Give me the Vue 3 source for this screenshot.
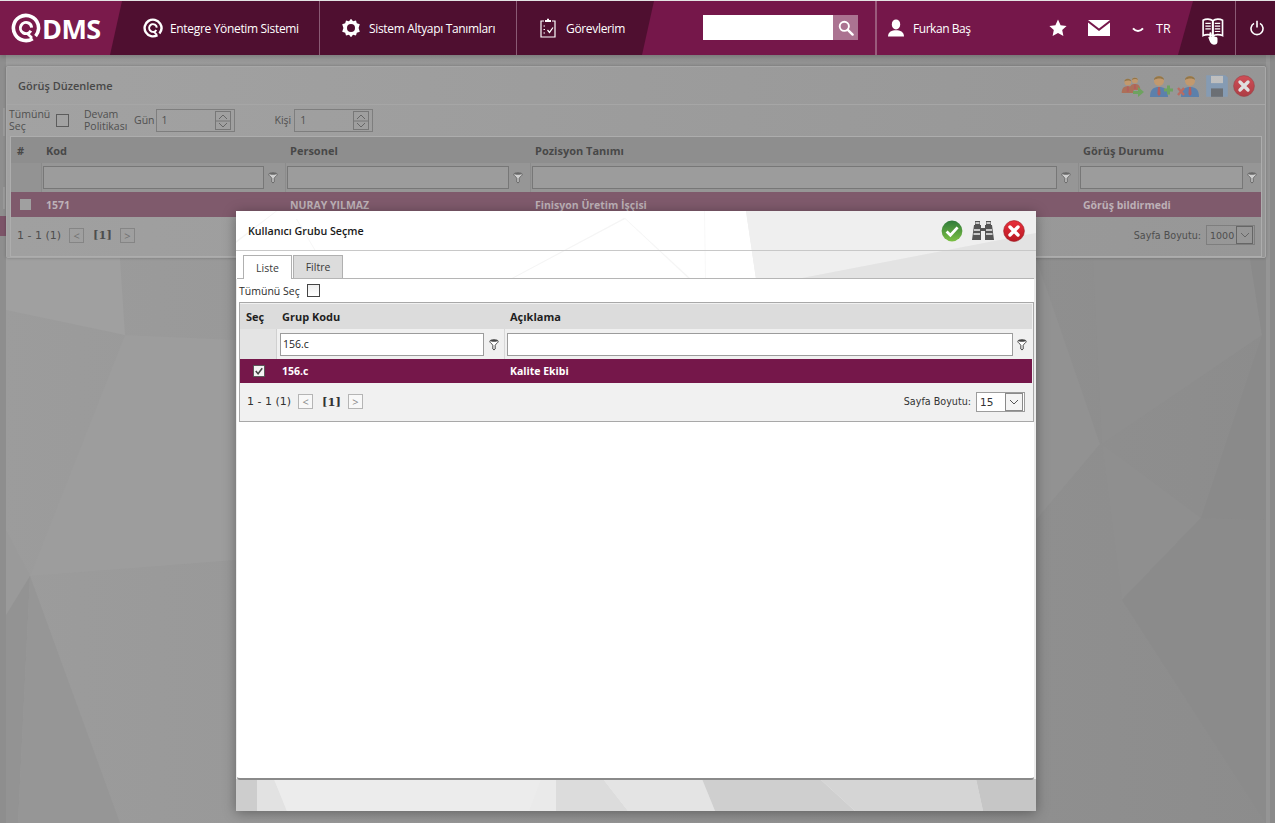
<script setup>
const panelCols = [
  { key: 'kod', label: 'Kod', value: '1571' },
  { key: 'per', label: 'Personel', value: 'NURAY YILMAZ' },
  { key: 'poz', label: 'Pozisyon Tanımı', value: 'Finisyon Üretim İşçisi' },
  { key: 'gor', label: 'Görüş Durumu', value: 'Görüş bildirmedi' }
]
const bgPolys = [
  ['6,258 120,258 125,335 6,310', '#a0a0a0'],
  ['125,335 236,340 236,560 30,576', '#9d9d9d'],
  ['6,530 30,576 6,615', '#9a9a9a'],
  ['6,615 30,576 18,823 6,823', '#939393'],
  ['30,576 120,823 18,823', '#969696'],
  ['1036,258 1100,444 1036,520', '#929292'],
  ['1093,258 1250,258 1262,335 1102,444', '#8f8f8f'],
  ['1262,335 1201,518 1266,520 1266,258 1250,258', '#8a8a8a'],
  ['1102,444 1201,518 1122,600', '#8f8f8f'],
  ['1201,518 1266,520 1266,823 1122,600', '#8b8b8b'],
  ['0,55 6,55 6,823 0,823', '#8e8e8e'],
  ['1266,55 1270,55 1270,823 1266,823', '#959595'],
  ['1270,55 1275,55 1275,823 1270,823', '#8a8a8a']
]
const modalPolys = [
  ['0,568 21,568 21,600 0,600', '#cdcdcd'],
  ['21,568 38,568 51,600 21,600', '#e2e2e2'],
  ['38,568 305,568 293,600 51,600', '#ececec'],
  ['305,568 320,568 320,600 293,600', '#eaeaea'],
  ['320,568 367,568 392,600 320,600', '#dcdcdc'],
  ['367,568 466,568 479,600 392,600', '#e4e4e4'],
  ['466,568 584,568 619,600 479,600', '#cfcfcf'],
  ['584,568 740,568 747,600 619,600', '#d5d5d5'],
  ['740,568 800,568 800,600 747,600', '#c6c6c6'],
  ['0,0 510,0 520,68 0,68', '#ffffff'],
  ['510,0 800,0 800,22 561,68 520,68', '#efefef'],
  ['561,68 800,22 800,68', '#e3e3e3'],
  ['388,7 389,8 276,68 274,68', '#f5f5f5'],
  ['388,7 389,7 455,68 453,68', '#f5f5f5'],
  ['468,0 469,0 470,68 469,68', '#f8f8f8'],
  ['0,30 40,0 41,0 0,32', '#f5f5f5'],
  ['60,8 61,8 80,40 79,40', '#f6f6f6']
]
</script>

<template>
  <div class="page">
    <svg class="sprites" width="0" height="0" aria-hidden="true">
      <defs>
        <linearGradient id="rd" x1="0" y1="0" x2="0" y2="1">
          <stop offset="0" stop-color="#e8303c" />
          <stop offset="1" stop-color="#b81822" />
        </linearGradient>
      </defs>
      <symbol id="funnel" viewBox="0 0 12 14">
        <path d="M1 3C1 .8 11 .8 11 3C11 5.4 7.8 6.2 7.4 8V12.4L6 13.6L4.6 12.4V8C4.2 6.2 1 5.4 1 3Z" fill="#fff" stroke="#333" stroke-width="1.1" />
        <ellipse cx="6" cy="2.6" rx="4" ry="1.2" fill="#444" />
      </symbol>
      <symbol id="red-x" viewBox="0 0 22 22">
        <circle cx="11" cy="11" r="10.4" fill="url(#rd)" stroke="#9b1d24" stroke-width=".6" />
        <path d="M7 7L15 15M15 7L7 15" stroke="#fff" stroke-width="3.4" stroke-linecap="round" />
      </symbol>
      <symbol id="person" viewBox="0 0 22 24">
        <circle cx="10" cy="7" r="5" fill="#d59a5e" />
        <path d="M5 6C5 1 15 1 15 6C13 4 8 4 5 6Z" fill="#8f6a2a" />
        <path d="M1 23C1 15 5 13 10 13C15 13 19 15 19 23Z" fill="currentColor" />
        <path d="M9 13H11L11.6 20L10 22L8.4 20Z" fill="#c04646" />
      </symbol>
    </svg>

    <svg class="backdrop" viewBox="0 0 1275 823" aria-hidden="true">
      <defs>
        <linearGradient id="bgg" x1="0" y1="0" x2="1" y2="0">
          <stop offset="0" stop-color="#9c9c9c" />
          <stop offset="1" stop-color="#8c8c8c" />
        </linearGradient>
      </defs>
      <rect width="1275" height="823" fill="url(#bgg)" />
      <polygon v-for="(p, i) in bgPolys" :key="i" :points="p[0]" :fill="p[1]" />
      <path d="M4 108V136M4 187V209" stroke="#a8a8a8" fill="none" />
    </svg>

    <header class="nav">
      <div class="nav-dark">
        <div class="logo">
          <svg class="logo-q" viewBox="0 0 30 30">
            <circle cx="15" cy="15" r="12.6" fill="none" stroke="#fff" stroke-width="3.6" stroke-dasharray="74.8 4.4" transform="rotate(58 15 15)" />
            <circle cx="15" cy="15" r="5.6" fill="none" stroke="#fff" stroke-width="3" stroke-dasharray="31 4.2" transform="rotate(30 15 15)" />
            <path d="M16 20.2L21 25" stroke="#fff" stroke-width="2.6" />
          </svg>
          <span>DMS</span>
        </div>
        <a class="nav-item first">
          <svg class="nav-ic" viewBox="0 0 20 20">
            <circle cx="10" cy="10" r="8.4" fill="none" stroke="#fff" stroke-width="2.4" stroke-dasharray="49.8 3" transform="rotate(58 10 10)" />
            <circle cx="10" cy="10" r="3.8" fill="none" stroke="#fff" stroke-width="2" stroke-dasharray="21 2.9" transform="rotate(30 10 10)" />
            <path d="M10.6 13.5L14 16.8" stroke="#fff" stroke-width="1.8" />
          </svg>
          Entegre Yönetim Sistemi
        </a>
        <a class="nav-item second">
          <svg class="nav-ic" viewBox="0 0 20 20">
            <path d="M10 .8L12 3.2L15 2.4L15.8 5.2L18.8 6.2L17.6 10L18.8 13.8L15.8 14.8L15 17.6L12 16.8L10 19.2L8 16.8L5 17.6L4.2 14.8L1.2 13.8L2.4 10L1.2 6.2L4.2 5.2L5 2.4L8 3.2Z" fill="#fff" />
            <circle cx="10" cy="10" r="4" fill="#4f0f30" />
          </svg>
          Sistem Altyapı Tanımları
        </a>
        <a class="nav-item third">
          <svg class="nav-ic" viewBox="0 0 20 20">
            <path d="M6 3H3V19H17V3H14" fill="none" stroke="#fff" stroke-width="1.2" />
            <path d="M7 4V2H9V.8H11V2H13V4Z" fill="#fff" />
            <path d="M5.5 8H7M5.5 11.5H7M5.5 15H7" stroke="#fff" stroke-width="1.2" />
            <path d="M9.5 12L11.5 14.4L15 9.5" fill="none" stroke="#fff" stroke-width="1.2" />
          </svg>
          Görevlerim
        </a>
      </div>

      <div class="search">
        <input class="search-input" type="text" />
        <button class="search-btn" type="button" aria-label="Ara">
          <svg viewBox="0 0 16 16" width="16" height="16">
            <circle cx="6.3" cy="6.3" r="4.6" fill="none" stroke="#fff" stroke-width="1.9" />
            <path d="M9.8 9.8L14.6 14.6" stroke="#fff" stroke-width="2.4" stroke-linecap="round" />
          </svg>
        </button>
      </div>

      <div class="user">
        <svg viewBox="0 0 16 18" width="16" height="18">
          <ellipse cx="8" cy="5.4" rx="4.2" ry="5" fill="#fff" />
          <path d="M0 17.6C0 12.6 4 11.2 8 11.2C12 11.2 16 12.6 16 17.6Z" fill="#fff" />
        </svg>
        <span>Furkan Baş</span>
      </div>

      <div class="nav-tools">
        <svg class="star" viewBox="0 0 18 18" width="18" height="18">
          <path d="M9 .6L11.6 6.2L17.6 6.9L13.2 11L14.4 17L9 14L3.6 17L4.8 11L.4 6.9L6.4 6.2Z" fill="#fff" />
        </svg>
        <svg class="mail" viewBox="0 0 22 16" width="22" height="16">
          <path d="M0 0H22L11 8.4Z" fill="#fff" />
          <path d="M0 2.6L11 11L22 2.6V16H0Z" fill="#fff" />
        </svg>
        <svg class="chev" viewBox="0 0 12 7" width="12" height="7">
          <path d="M1 1.4C4 4.8 8 4.8 11 1.4" fill="none" stroke="#fff" stroke-width="2" />
        </svg>
        <span class="lang">TR</span>
      </div>

      <div class="nav-end">
        <div class="book">
          <svg viewBox="0 0 24 30" width="22" height="27">
            <path d="M1 2.5C4 .8 9 .8 11.6 3V20C9 18 4 18 1 19.6Z" fill="none" stroke="#fff" stroke-width="1.8" />
            <path d="M22.6 2.5C19.6 .8 14.6 .8 12 3V20C14.6 18 19.6 18 22.6 19.6Z" fill="none" stroke="#fff" stroke-width="1.8" />
            <path d="M3.5 6H9.5M3.5 9H9.5M3.5 12H9.5M14 6H20M14 9H20M14 12H20M14 15H20" stroke="#fff" stroke-width="1.3" />
            <path d="M8 17C8 15.6 10.4 15.6 10.4 17V21C11 20 14 20 14.6 21C15.6 20.6 17 21.4 17 23V26C17 28.4 15.6 29.6 13 29.6C10.4 29.6 9.2 28 8 25L6.8 21.6C7 21 7.6 21 8 21.4Z" fill="#fff" />
          </svg>
        </div>
        <div class="power">
          <svg viewBox="0 0 14 16" width="14" height="16">
            <path d="M4 3.4A6 6 0 1 0 10 3.4" fill="none" stroke="#fff" stroke-width="1.6" />
            <path d="M7 .8V7.5" stroke="#fff" stroke-width="1.6" />
          </svg>
        </div>
      </div>
    </header>

    <div class="edge-tab"></div>

    <main class="content">
      <section class="panel">
        <div class="panel-head">
          <h2>Görüş Düzenleme</h2>
          <div class="panel-icons">
            <svg class="p-red" viewBox="0 0 24 24" width="24" height="24">
              <use href="#person" x="0" y="3" width="15" height="17" />
              <use href="#person" x="8" y="2" width="13" height="15" />
              <path d="M12 17H17V13L23 18L17 23V20H12Z" fill="#5da84a" />
            </svg>
            <svg class="p-blue" viewBox="0 0 24 24" width="24" height="24">
              <use href="#person" x="0" y="0" width="22" height="24" />
              <path d="M15 14.4H18V11.4H21V14.4H24V17.4H21V20.4H18V17.4H15Z" fill="#5da84a" />
            </svg>
            <svg class="p-blue" viewBox="0 0 24 24" width="24" height="24">
              <use href="#person" x="3" y="0" width="22" height="24" />
              <path d="M1 14L7 21M7 14L1 21" stroke="#c85a4c" stroke-width="2.4" />
            </svg>
            <svg viewBox="0 0 20 20" width="24" height="24">
              <path d="M1 1H17L19 3V19H1Z" fill="#7f9ec0" />
              <path d="M5 1.6H15V7.6H5Z" fill="#d0d0d0" />
              <path d="M5 12H15V19H5Z" fill="#5a5f66" />
            </svg>
            <svg class="dim-x" width="22" height="22"><use href="#red-x" /></svg>
          </div>
        </div>

        <div class="panel-tools">
          <label class="t-all">Tümünü Seç</label>
          <span class="cb"></span>
          <span class="t-devam">Devam Politikası</span>
          <span class="t-lbl gun">Gün</span>
          <div class="spin">
            <span>1</span>
            <i class="spin-btn"><svg viewBox="0 0 14 18" width="14" height="18"><path d="M3 7L7 3L11 7M3 11L7 15L11 11" fill="none" stroke="#666" /><path d="M0 9H14" stroke="#777" /></svg></i>
          </div>
          <span class="t-lbl kisi">Kişi</span>
          <div class="spin">
            <span>1</span>
            <i class="spin-btn"><svg viewBox="0 0 14 18" width="14" height="18"><path d="M3 7L7 3L11 7M3 11L7 15L11 11" fill="none" stroke="#666" /><path d="M0 9H14" stroke="#777" /></svg></i>
          </div>
        </div>

        <div class="ptable">
          <div class="prow phead">
            <div class="pc-h hash">#</div>
            <div v-for="c in panelCols" :key="c.key" class="pc-h">{{ c.label }}</div>
          </div>
          <div class="prow pfilter">
            <div class="pf-empty"></div>
            <div v-for="c in panelCols" :key="c.key" class="pf">
              <span class="pf-input"></span>
              <svg class="dim-f" width="10" height="13"><use href="#funnel" /></svg>
            </div>
          </div>
          <div class="prow pdata">
            <div class="pd-check"><span></span></div>
            <div v-for="c in panelCols" :key="c.key" class="pd">{{ c.value }}</div>
          </div>
          <div class="ppager">
            <span class="range">1 - 1 (1)</span>
            <span class="pg-btn">&lt;</span>
            <b class="pg-num">[1]</b>
            <span class="pg-btn">&gt;</span>
            <span class="grow"></span>
            <span class="size-lbl">Sayfa Boyutu:</span>
            <div class="psize"><span>1000</span><i><svg viewBox="0 0 10 6" width="10" height="6"><path d="M1 1L5 5L9 1" fill="none" stroke="#666" /></svg></i></div>
          </div>
        </div>
      </section>
    </main>

    <div class="dialog">
      <svg class="dialog-bg" viewBox="0 0 800 600" aria-hidden="true">
        <rect width="800" height="600" fill="#ececec" />
        <polygon v-for="(p, i) in modalPolys" :key="i" :points="p[0]" :fill="p[1]" />
      </svg>
      <div class="d-head">
        <h3>Kullanıcı Grubu Seçme</h3>
        <div class="d-icons">
          <svg viewBox="0 0 22 22" width="22" height="22">
            <defs>
              <linearGradient id="gr" x1="0" y1="0" x2="0" y2="1">
                <stop offset="0" stop-color="#2f7a3a" />
                <stop offset="1" stop-color="#7cc044" />
              </linearGradient>
            </defs>
            <circle cx="11" cy="11" r="10.4" fill="url(#gr)" />
            <path d="M5.6 11.5L9.4 15.2L16.6 7.4" fill="none" stroke="#fff" stroke-width="2.8" />
          </svg>
          <svg viewBox="0 0 22 22" width="22" height="22">
            <path d="M3 1H8V5H9V8H13V5H14V1H19V5H20L22 20H13V11H9V20H0L2 5H3Z" fill="#555" />
            <path d="M2 10H8M14 10H20M1.5 14H8M14 14H20.5M3.5 3H7.5M14.5 3H18.5" stroke="#eee" stroke-width="1.4" />
          </svg>
          <svg width="22" height="22"><use href="#red-x" /></svg>
        </div>
      </div>
      <div class="tabs">
        <span class="tab active">Liste</span>
        <span class="tab">Filtre</span>
      </div>
      <div class="d-body">
        <div class="select-all">
          <span>Tümünü Seç</span>
          <span class="cb-light"></span>
        </div>
        <div class="gtable">
          <div class="grow-row ghead">
            <div class="gh">Seç</div>
            <div class="gh">Grup Kodu</div>
            <div class="gh">Açıklama</div>
          </div>
          <div class="grow-row gfilter">
            <div class="gf-empty"></div>
            <div class="gf">
              <input class="gf-input" type="text" value="156.c" />
              <svg width="10" height="13"><use href="#funnel" /></svg>
            </div>
            <div class="gf">
              <input class="gf-input" type="text" />
              <svg width="10" height="13"><use href="#funnel" /></svg>
            </div>
          </div>
          <div class="grow-row gdata">
            <div class="gd-check">
              <svg viewBox="0 0 13 13" width="12" height="12">
                <rect x=".5" y=".5" width="12" height="12" fill="#f4f4f4" stroke="#555" />
                <path d="M3 6.5L5.5 9.4L10 3.6" fill="none" stroke="#444" stroke-width="1.7" />
              </svg>
            </div>
            <div class="gd">156.c</div>
            <div class="gd">Kalite Ekibi</div>
          </div>
          <div class="gpager">
            <span class="g-range">1 - 1 (1)</span>
            <span class="g-btn">&lt;</span>
            <b class="g-num">[1]</b>
            <span class="g-btn">&gt;</span>
            <span class="grow"></span>
            <span class="g-size-lbl">Sayfa Boyutu:</span>
            <div class="gsize"><span>15</span><i><svg viewBox="0 0 10 6" width="10" height="6"><path d="M1 1L5 5L9 1" fill="none" stroke="#555" /></svg></i></div>
          </div>
        </div>
      </div>
    </div>
  </div>
</template>

<style>
html, body { margin: 0; padding: 0; background: #8f8f8f; }
</style>

<style scoped>
* { box-sizing: border-box; }
.page {
  position: relative;
  width: 1275px;
  height: 823px;
  overflow: hidden;
  font-family: "Open Sans", "Noto Sans", sans-serif;
  background: #909090;
}
.sprites { position: absolute; }
.backdrop { position: absolute; left: 0; top: 0; width: 1275px; height: 823px; }

.nav {
  position: relative;
  display: flex;
  align-items: stretch;
  height: 55px;
  border-top: 1px solid #e4e4e4;
  background: #75174a;
  color: #fff;
  font-size: 12px;
  box-shadow: 0 2px 5px rgba(0,0,0,.2);
}
.nav-dark {
  display: flex;
  width: 654px;
  background: #4f0f30;
  clip-path: polygon(0 0, 100% 0, 642px 100%, 0 100%);
}
.logo {
  width: 122px;
  background: #7a1a4b;
  clip-path: polygon(0 0, 100% 0, 110px 100%, 0 100%);
  display: flex;
  align-items: center;
  padding-left: 11px;
  font-family: "Open Sans", sans-serif;
  font-weight: 700;
  font-size: 27px;
  letter-spacing: -.6px;
  flex: none;
}
.logo-q { width: 30px; height: 30px; margin-right: 1px; }
.nav-item {
  display: flex;
  align-items: center;
  gap: 8px;
  height: 100%;
  white-space: nowrap;
  flex: none;
  letter-spacing: -.33px;
}
.nav-item.first { width: 198px; padding-left: 21px; border-right: 1px solid #8a5a74; gap: 7px; }
.nav-item.second { width: 197px; padding-left: 21px; border-right: 1px solid #8a5a74; }
.nav-item.third { padding-left: 21px; }
.nav-ic { width: 20px; height: 20px; flex: none; }

.search {
  display: flex;
  align-items: center;
  margin-left: 49px;
  width: 174px;
  flex: none;
  border-right: 2px solid #9a5a7c;
  padding-bottom: 1px;
}
.search-input {
  width: 130px;
  height: 25px;
  border: 0;
  background: #fff;
  padding: 0;
}
.search-btn {
  width: 25px;
  height: 25px;
  border: 0;
  padding: 0;
  background: #ab7391;
  display: flex;
  align-items: center;
  justify-content: center;
}
.user {
  display: flex;
  align-items: center;
  gap: 9px;
  padding-left: 11px;
  width: 171px;
  flex: none;
  letter-spacing: -.45px;
}
.nav-tools {
  display: flex;
  align-items: center;
  width: 142px;
  flex: none;
  font-size: 12.5px;
}
.star { margin-left: 1px; }
.mail { margin-left: 21px; }
.chev { margin-left: 22px; margin-top: 4px; }
.lang { margin-left: 12px; margin-top: 1px; }
.nav-end {
  display: flex;
  flex: 1;
  margin-left: -12px;
  background: #4f0f30;
  clip-path: polygon(15px 0, 100% 0, 100% 100%, 0 100%);
}
.book {
  width: 58px;
  flex: none;
  display: flex;
  align-items: center;
  padding-left: 24px;
  padding-top: 7px;
  border-right: 1px solid #8a5a74;
}
.power { flex: 1; display: flex; align-items: center; justify-content: center; padding-left: 2px; }

.edge-tab {
  position: absolute;
  left: 0;
  top: 216px;
  width: 6px;
  height: 20px;
  background: #7c5468;
}

.content { position: relative; padding: 11px 9px 0 6px; }
.panel {
  height: 192px;
  border: 1px solid #a8a8a8;
  border-radius: 2px;
  background: linear-gradient(90deg, #a2a2a2, #969696);
  box-shadow: 0 0 3px rgba(0,0,0,.25);
  color: #474747;
}
.panel-head {
  height: 38px;
  border-bottom: 1px solid #a6a6a6;
  display: flex;
  align-items: center;
  justify-content: space-between;
  padding: 0 10px 0 11px;
}
.panel-head h2 { margin: 0; font-size: 11px; font-weight: 600; color: #484848; }
.panel-icons { display: flex; align-items: center; gap: 4px; opacity: .7; }
.p-red { color: #b5603f; }
.p-blue { color: #4477b4; }
.panel-tools {
  display: flex;
  align-items: center;
  height: 30px;
  font-size: 10.5px;
  line-height: 12px;
  color: #505050;
}
.t-all { width: 40px; margin-left: 2px; }
.cb { width: 13px; height: 13px; border: 1px solid #5c5c5c; background: #a2a2a2; margin-left: 7px; }
.t-devam { width: 44px; margin-left: 15px; }
.t-lbl.gun { margin-left: 6px; margin-right: 1px; }
.t-lbl.kisi { margin-left: 40px; margin-right: 3px; }
.spin {
  width: 79px;
  height: 23px;
  border: 1px solid #7e7e7e;
  display: flex;
  align-items: center;
  justify-content: space-between;
  padding: 0 3px 0 5px;
}
.spin-btn { display: flex; border: 1px solid #777; height: 19px; }
.ptable {
  margin: 1px 3px 0 3px;
  border: 1px solid #adadad;
  height: 121px;
  background: linear-gradient(90deg, #a0a0a0, #979797);
}
.prow { display: grid; grid-template-columns: 31px 244px 245px 548px 1fr; }
.phead { height: 26px; background: #8e8e8e; align-items: center; font-weight: 700; font-size: 11px; color: #484848; }
.pc-h { padding-left: 4px; }
.pc-h.hash { padding-left: 6px; }
.pfilter { height: 29px; background: #969696; }
.pf-empty { background: #939393; border-right: 1px solid #8a8a8a; }
.pf { display: flex; align-items: center; gap: 4px; padding: 0 7px 0 1px; border-right: 1px solid #8c8c8c; }
.pf:last-child { padding-right: 4px; border-right: 0; }
.pf-input { flex: 1; height: 23px; border: 1px solid #777; background: #9c9c9c; }
.dim-f { opacity: .55; flex: none; }
.pdata { height: 25px; background: #7f5a6c; align-items: center; color: #bdb1b7; font-size: 10.5px; font-weight: 700; }
.pd-check { display: flex; padding-left: 9px; }
.pd-check span { width: 11px; height: 11px; background: #a0a0a0; }
.pd { padding-left: 4px; white-space: nowrap; }
.ppager { display: flex; align-items: center; height: 36px; padding: 0 6px 0 6px; font-size: 11px; color: #4e4e4e; }
.range { margin-right: 8px; font: 11px "DejaVu Sans", sans-serif; }
.pg-btn { width: 15px; height: 15px; border: 1px solid #858585; display: flex; align-items: center; justify-content: center; font-size: 11px; line-height: 1; color: #707070; }
.pg-num { margin: 0 8px 0 9px; font-family: "DejaVu Serif", serif; font-size: 11.5px; }
.grow { flex: 1; }
.size-lbl { margin-right: 5px; font: 9.6px "DejaVu Sans", sans-serif; }
.psize { width: 49px; height: 20px; border: 1px solid #7e7e7e; display: flex; align-items: center; justify-content: space-between; padding: 0 1px 0 3px; font: 9.5px "DejaVu Sans", sans-serif; }
.psize i { width: 17px; height: 18px; border: 1px solid #666; display: flex; align-items: center; justify-content: center; }

.dialog {
  position: absolute;
  left: 236px;
  top: 211px;
  width: 800px;
  height: 600px;
  box-shadow: 0 2px 12px rgba(0,0,0,.35);
  display: flex;
  flex-direction: column;
  padding-left: 1px;
  padding-right: 2px;
}
.dialog-bg { position: absolute; left: 0; top: 0; width: 800px; height: 600px; }
.d-head {
  position: relative;
  height: 40px;
  margin: 0 -2px 0 -1px;
  padding: 1px 11px 0 12px;
  border-bottom: 1px solid #c8c8c8;
  display: flex;
  align-items: center;
  justify-content: space-between;
}
.d-head h3 { margin: 0; font-size: 10.7px; font-weight: 600; color: #1a1a1a; }
.d-icons { display: flex; gap: 9px; margin-top: -1px; }
.tabs {
  position: relative;
  display: flex;
  align-items: flex-end;
  gap: 1px;
  height: 28px;
  padding-left: 6px;
  border-bottom: 1px solid #b5b5b5;
  font-size: 10.5px;
  color: #3a3a3a;
}
.tab {
  width: 50px;
  height: 23px;
  background: #dcdcdc;
  border: 1px solid #b0b0b0;
  border-bottom: 0;
  display: flex;
  align-items: center;
  justify-content: center;
}
.tab.active { width: 49px; height: 24px; background: #fff; margin-bottom: -1px; }
.d-body {
  position: relative;
  height: 501px;
  background: #fff;
  border-bottom: 2px solid #8a8a8a;
  border-radius: 0 0 3px 3px;
  padding: 0 1px 0 2px;
}
.select-all {
  display: flex;
  align-items: center;
  height: 23px;
  gap: 7px;
  font-size: 10.5px;
  color: #2c2c2c;
}
.cb-light { width: 13px; height: 13px; border: 1px solid #444; background: linear-gradient(#eee, #fff); }
.gtable { border: 1px solid #a8a8a8; height: 120px; width: 795px; background: #f1f1f1; }
.grow-row { display: grid; grid-template-columns: 37px 228px 1fr; margin: 1px 1px 0 0; }
.grow-row + .grow-row { margin-top: 0; }
.ghead { height: 25px; background: #dcdcdc; align-items: center; font-weight: 700; font-size: 11px; color: #1f1f1f; }
.gh { padding-left: 6px; }
.gh + .gh { padding-left: 5px; }
.gfilter { height: 30px; background: #f0f0f0; }
.gf-empty { background: #e4e4e4; border-right: 1px solid #d0d0d0; }
.gf { display: flex; align-items: center; gap: 5px; padding: 0 5px 0 3px; border-right: 1px solid #d8d8d8; }
.gf + .gf { border-right: 0; padding-left: 2px; gap: 4px; }
.gf-input {
  flex: 1;
  min-width: 0;
  height: 23px;
  border: 1px solid #9c9c9c;
  background: #fff;
  padding: 0 2px;
  font: 10.5px "Open Sans", sans-serif;
  color: #222;
  outline: 0;
}
.gdata { height: 24px; background: #75174a; align-items: center; color: #fff; font-weight: 700; font-size: 10.5px; }
.gd-check { display: flex; padding-left: 13px; }
.gd { padding-left: 5px; }
.gpager {
  display: flex;
  align-items: center;
  height: 37px;
  padding: 0 8px 0 7px;
  font-size: 11px;
  color: #333;
}
.g-range { margin-right: 7px; font: 11px "DejaVu Sans", sans-serif; }
.g-btn { width: 15px; height: 15px; border: 1px solid #b5b5b5; display: flex; align-items: center; justify-content: center; font-size: 11px; line-height: 1; color: #888; background: #f8f8f8; }
.g-num { margin: 0 7px 0 9px; font-family: "DejaVu Serif", serif; font-size: 11.5px; }
.g-size-lbl { margin-right: 5px; font: 9.6px "DejaVu Sans", sans-serif; }
.gsize { width: 49px; height: 20px; border: 1px solid #9c9c9c; background: #fff; display: flex; align-items: center; justify-content: space-between; padding: 0 1px 0 3px; font: 10.5px "DejaVu Sans", sans-serif; }
.gsize i { width: 18px; height: 18px; border: 1px solid #8a8a8a; display: flex; align-items: center; justify-content: center; background: #f4f4f4; }
</style>
